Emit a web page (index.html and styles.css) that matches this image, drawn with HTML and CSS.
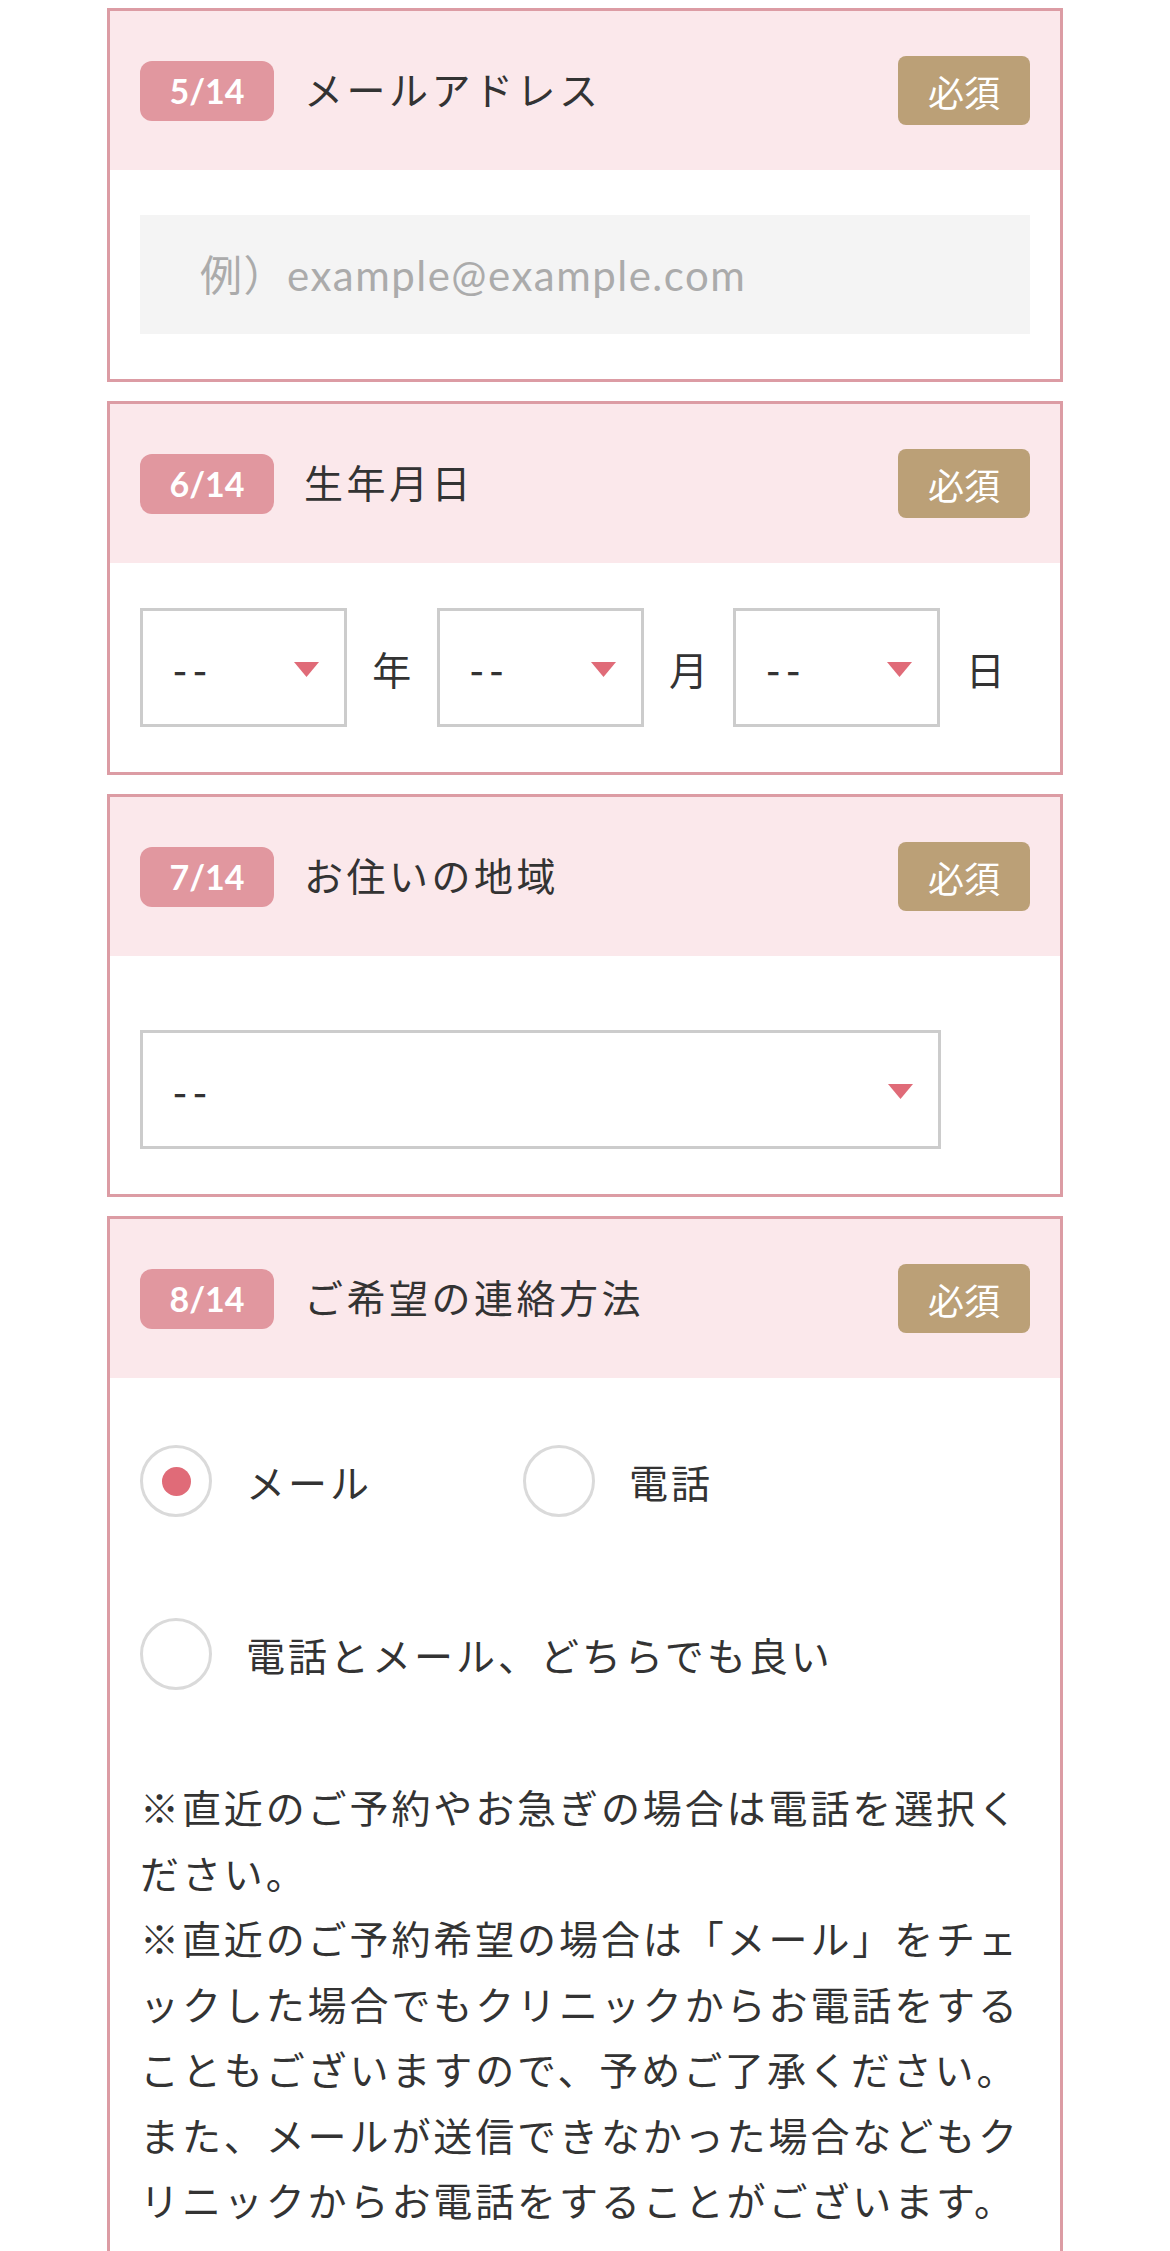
FILE: index.html
```html
<!DOCTYPE html>
<html lang="ja">
<head>
<meta charset="utf-8">
<title>フォーム</title>
<link rel="stylesheet" href="styles.css">
</head>
<body>
<div class="form">

  <section class="card">
    <div class="card-head">
      <span class="num">5/14</span>
      <span class="title">メールアドレス</span>
      <span class="req">必須</span>
    </div>
    <div class="card-body">
      <input class="text-input" type="email" placeholder="例）example@example.com">
    </div>
  </section>

  <section class="card">
    <div class="card-head">
      <span class="num">6/14</span>
      <span class="title">生年月日</span>
      <span class="req">必須</span>
    </div>
    <div class="card-body">
      <div class="date-row">
        <div class="date-group">
          <div class="select select-small"><span class="val">--</span><svg class="arrow" width="25" height="15" viewBox="0 0 25 15"><polygon points="0,0 25,0 12.5,15"/></svg></div>
          <span class="unit">年</span>
        </div>
        <div class="date-group">
          <div class="select select-small"><span class="val">--</span><svg class="arrow" width="25" height="15" viewBox="0 0 25 15"><polygon points="0,0 25,0 12.5,15"/></svg></div>
          <span class="unit">月</span>
        </div>
        <div class="date-group">
          <div class="select select-small"><span class="val">--</span><svg class="arrow" width="25" height="15" viewBox="0 0 25 15"><polygon points="0,0 25,0 12.5,15"/></svg></div>
          <span class="unit">日</span>
        </div>
      </div>
    </div>
  </section>

  <section class="card">
    <div class="card-head">
      <span class="num">7/14</span>
      <span class="title">お住いの地域</span>
      <span class="req">必須</span>
    </div>
    <div class="card-body body-region">
      <div class="select select-wide"><span class="val">--</span><svg class="arrow" width="25" height="15" viewBox="0 0 25 15"><polygon points="0,0 25,0 12.5,15"/></svg></div>
    </div>
  </section>

  <section class="card">
    <div class="card-head">
      <span class="num">8/14</span>
      <span class="title">ご希望の連絡方法</span>
      <span class="req">必須</span>
    </div>
    <div class="card-body body-contact">
      <div class="radio-row">
        <div class="radio radio-first"><span class="circle"><span class="dot"></span></span><span class="radio-label">メール</span></div>
        <div class="radio"><span class="circle"></span><span class="radio-label">電話</span></div>
      </div>
      <div class="radio-row second">
        <div class="radio"><span class="circle"></span><span class="radio-label">電話とメール、どちらでも良い</span></div>
      </div>
      <p class="note">※直近のご予約やお急ぎの場合は電話を選択ください。<br>※直近のご予約希望の場合は「メール」をチェックした場合でもクリニックからお電話をすることもございますので、予めご了承ください。また、メールが送信できなかった場合などもクリニックからお電話をすることがございます。</p>
    </div>
  </section>

</div>
</body>
</html>
```

FILE: styles.css
```css
* {
  box-sizing: border-box;
}

body {
  margin: 0;
  background: #ffffff;
  color: #333333;
  font-family: "Noto Sans CJK JP", "Noto Sans", sans-serif;
}

.form {
  width: 956px;
  margin: 8px auto 0;
  display: flex;
  flex-direction: column;
  gap: 19px;
}

.card {
  border: 3px solid #dc9ca4;
  background: #ffffff;
}

.card-head {
  height: 159px;
  background: #fbe8eb;
  display: flex;
  align-items: center;
  padding: 0 30px;
}

.num {
  width: 134px;
  height: 60px;
  border-radius: 12px;
  background: #e1979f;
  color: #ffffff;
  font-family: Lato, "Noto Sans", sans-serif;
  font-weight: 700;
  font-size: 34px;
  display: flex;
  align-items: center;
  justify-content: center;
}

.title {
  margin-left: 30px;
  margin-bottom: 6px;
  font-size: 39px;
  letter-spacing: 3.5px;
  color: #333333;
}

.req {
  margin-left: auto;
  width: 132px;
  height: 69px;
  border-radius: 8px;
  background: #bba077;
  color: #ffffff;
  font-size: 36px;
  display: flex;
  align-items: center;
  justify-content: center;
}

.card-body {
  padding: 45px 30px;
}

.text-input {
  display: block;
  width: 100%;
  height: 119px;
  border: none;
  outline: none;
  background: #f4f4f4;
  padding: 0 0 0 60px;
  margin: 0;
  font-family: Lato, "Noto Sans CJK JP", sans-serif;
  font-size: 42px;
  letter-spacing: 1.5px;
  color: #333333;
}

.text-input::placeholder {
  color: #ababab;
}

.date-row {
  display: flex;
}

.date-group {
  flex: 1;
  display: flex;
  align-items: center;
}

.select {
  height: 119px;
  border: 3px solid #cccccc;
  background: #ffffff;
  display: flex;
  align-items: center;
  justify-content: space-between;
  padding: 0 25px 0 30px;
  font-size: 39px;
}

.select-small {
  width: 207px;
  flex: none;
}

.select-wide {
  width: 801px;
}

.val {
  letter-spacing: 6px;
  font-weight: 500;
  color: #333333;
}

.arrow {
  display: block;
  fill: #e06b78;
  margin-top: 4px;
}

.unit {
  flex: 1;
  text-align: center;
  font-size: 39px;
  color: #333333;
}

.body-region {
  padding-top: 74px;
}

.body-contact {
  padding-top: 38px;
}

.radio-row {
  display: flex;
  height: 130px;
  align-items: center;
}

.radio-row.second {
  margin-top: 43px;
}

.radio {
  display: flex;
  align-items: center;
}

.radio-first {
  width: 383px;
}

.circle {
  width: 72px;
  height: 72px;
  border-radius: 50%;
  border: 3px solid #dadada;
  background: #ffffff;
  display: flex;
  align-items: center;
  justify-content: center;
  flex: none;
}

.dot {
  width: 29px;
  height: 29px;
  border-radius: 50%;
  background: #e06b78;
}

.radio-label {
  margin-left: 34px;
  font-size: 39px;
  letter-spacing: 3px;
}

.note {
  margin: 55px 0 0;
  font-size: 39px;
  line-height: 65.5px;
  letter-spacing: 2.9px;
  line-break: anywhere;
}
```
